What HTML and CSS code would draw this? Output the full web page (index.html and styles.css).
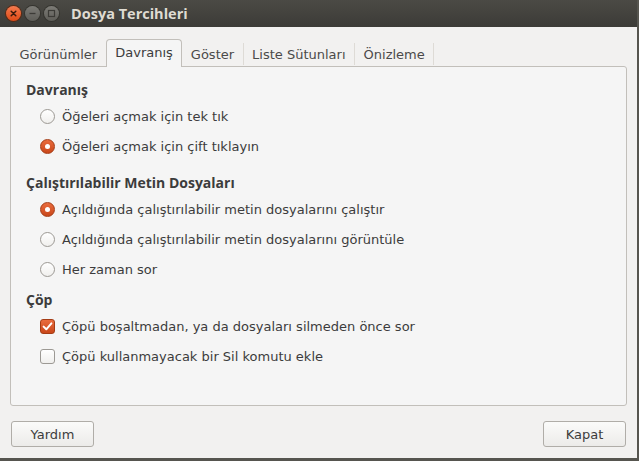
FILE: index.html
```html
<!DOCTYPE html>
<html lang="tr">
<head>
<meta charset="utf-8">
<title>Dosya Tercihleri</title>
<link rel="stylesheet" href="styles.css">
</head>
<body>
<div class="window">
  <div class="titlebar">
    <div class="wbuttons">
      <span class="wbtn close"><svg width="15" height="15" viewBox="0 0 15 15"><path d="M5.2 5.2 L9.8 9.8 M9.8 5.2 L5.2 9.8" stroke="#3a1a0c" stroke-width="1.5" stroke-linecap="round"/></svg></span>
      <span class="wbtn"><svg width="15" height="15" viewBox="0 0 15 15"><path d="M4.5 7.5 H10.5" stroke="#3c3b37" stroke-width="1.3"/></svg></span>
      <span class="wbtn"><svg width="15" height="15" viewBox="0 0 15 15"><rect x="4.5" y="4.5" width="6" height="6" fill="none" stroke="#3c3b37" stroke-width="1.2"/></svg></span>
    </div>
    <div class="title">Dosya Tercihleri</div>
  </div>
  <div class="content">
    <div class="tabs">
      <div class="tab">Görünümler</div>
      <div class="tab active">Davranış</div>
      <div class="tab">Göster</div>
      <div class="tab">Liste Sütunları</div>
      <div class="tab">Önizleme</div>
    </div>
    <div class="panel">
      <div class="section s1">
        <div class="heading">Davranış</div>
        <div class="row"><span class="radio"></span>Öğeleri açmak için tek tık</div>
        <div class="row"><span class="radio on"></span>Öğeleri açmak için çift tıklayın</div>
      </div>
      <div class="section s2">
        <div class="heading">Çalıştırılabilir Metin Dosyaları</div>
        <div class="row"><span class="radio on"></span>Açıldığında çalıştırılabilir metin dosyalarını çalıştır</div>
        <div class="row"><span class="radio"></span>Açıldığında çalıştırılabilir metin dosyalarını görüntüle</div>
        <div class="row"><span class="radio"></span>Her zaman sor</div>
      </div>
      <div class="section s3">
        <div class="heading">Çöp</div>
        <div class="row"><span class="check on"><svg width="15" height="15" viewBox="0 0 15 15"><path d="M3.6 7.6 L6.3 10.3 L11.4 4.4" fill="none" stroke="#fff" stroke-width="2" stroke-linecap="round" stroke-linejoin="round"/></svg></span>Çöpü boşaltmadan, ya da dosyaları silmeden önce sor</div>
        <div class="row"><span class="check"></span>Çöpü kullanmayacak bir Sil komutu ekle</div>
      </div>
    </div>
    <div class="buttons">
      <button class="btn">Yardım</button>
      <button class="btn">Kapat</button>
    </div>
  </div>
</div>
</body>
</html>
```

FILE: styles.css
```css
* { box-sizing: border-box; }
html, body { margin: 0; padding: 0; }
body {
  width: 639px;
  height: 461px;
  overflow: hidden;
  background: #56554f;
  font-family: "DejaVu Sans", "Noto Sans", sans-serif;
  font-size: 13px;
  color: #3c3c3c;
}
.window {
  width: 637px;
  height: 458px;
  background: #f2f1f0;
  display: flex;
  flex-direction: column;
}
.titlebar {
  height: 27px;
  flex: none;
  background: linear-gradient(#4b4a45, #3c3b37);
  display: flex;
  align-items: center;
  padding-left: 6px;
}
.wbuttons { display: flex; gap: 4px; }
.wbtn {
  width: 15px;
  height: 15px;
  border-radius: 50%;
  background: linear-gradient(#7c7b76, #5e5d58);
  box-shadow: 0 0 0 1px #35342f;
  display: block;
}
.wbtn svg { display: block; }
.wbtn.close { background: linear-gradient(#f57a4e, #df4a16); box-shadow: 0 0 0 1px #5a2a14; }
.title {
  margin-left: 12px;
  color: #dfdbd2;
  font-family: "Open Sans", "Noto Sans", sans-serif;
  font-weight: 700;
  font-size: 14.5px;
}
.content {
  flex: 1;
  display: flex;
  flex-direction: column;
  padding: 12px 10px 0 10px;
}
.tabs {
  display: flex;
  padding-left: 1px;
  height: 27px;
  align-items: flex-end;
}
.tab {
  height: 22px;
  padding: 0 8.5px;
  display: flex;
  align-items: center;
  border-right: 1px solid #dedbd6;
  color: #4a4a4a;
  margin-bottom: 1px;
}
.tab:has(+ .active) { border-right: none; }
.tab.active {
  height: 28px;
  margin-bottom: -1px;
  padding: 0 8.5px 2px 8.5px;
  background: #f5f5f5;
  border: 1px solid #c2bfba;
  border-bottom: none;
  border-radius: 4px 4px 0 0;
  color: #3c3c3c;
  position: relative;
  z-index: 1;
}
.panel {
  height: 340px;
  background: #f5f5f5;
  border: 1px solid #c2bfba;
  border-radius: 0 3px 3px 3px;
  padding: 13px 15px 0 15px;
}
.heading {
  height: 20px;
  line-height: 20px;
  font-family: "Open Sans", "Noto Sans", sans-serif;
  font-size: 14px;
  font-weight: 700;
  color: #3c3c3c;
}
.heading + .row { margin-top: 1px; }
.s2 { margin-top: 12px; }
.s3 { margin-top: 6px; }
.row {
  height: 30px;
  display: flex;
  align-items: center;
  padding-left: 14px;
}
.radio, .check {
  width: 15px;
  height: 15px;
  flex: none;
  margin-right: 7px;
  background: linear-gradient(#ffffff, #f0efed);
  border: 1px solid #9c9994;
  display: flex;
  align-items: center;
  justify-content: center;
}
.radio { border-radius: 50%; }
.check { border-radius: 3px; }
.radio.on, .check.on {
  background: linear-gradient(#ea6c3e, #c9471a);
  border-color: #a43c15;
}
.radio.on::after {
  content: "";
  width: 5px;
  height: 5px;
  border-radius: 50%;
  background: #fff;
}
.check svg { display: block; margin: -1px; }
.buttons {
  display: flex;
  justify-content: space-between;
  margin-top: 15px;
  padding: 0 1px;
}
.btn {
  width: 83px;
  height: 26px;
  font-family: inherit;
  font-size: 13px;
  color: #3c3c3c;
  background: linear-gradient(#fbfbfa, #ecebe9);
  border: 1px solid #b0ada8;
  border-radius: 3px;
  padding: 0;
}
```
